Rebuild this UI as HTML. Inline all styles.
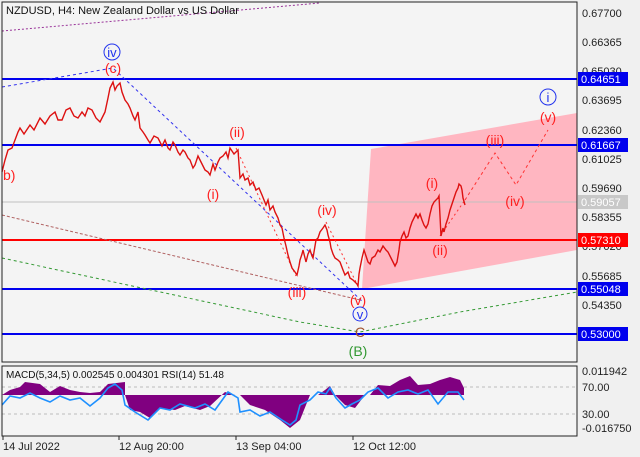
<!DOCTYPE html>
<html><head><meta charset="utf-8"><style>
html,body{margin:0;padding:0;background:#f0f0f0;}
svg{display:block;font-family:"Liberation Sans",sans-serif;}
</style></head><body>
<svg width="640" height="457" xmlns="http://www.w3.org/2000/svg">
<rect x="0" y="0" width="640" height="457" fill="#f0f0f0"/>
<rect x="2" y="2" width="575" height="360" fill="#f4f4f4"/>
<rect x="2" y="366" width="575" height="70" fill="#f4f4f4"/>
<polygon points="371,149 577,113 577,250 362,289" fill="#ffb6c1"/>
<line x1="2" y1="202" x2="577" y2="202" stroke="#c0c0c0" stroke-width="1"/>
<line x1="2" y1="79" x2="577" y2="79" stroke="#0000ee" stroke-width="2"/>
<line x1="2" y1="145" x2="577" y2="145" stroke="#0000ee" stroke-width="2"/>
<line x1="2" y1="240" x2="577" y2="240" stroke="#ff0000" stroke-width="2"/>
<line x1="2" y1="289" x2="577" y2="289" stroke="#0000ee" stroke-width="2"/>
<line x1="2" y1="334" x2="577" y2="334" stroke="#0000ee" stroke-width="2"/>
<polyline points="2,31 320,3" fill="none" stroke="#993399" stroke-dasharray="2,2"/>
<polyline points="2,87 113,68 363,302" fill="none" stroke="#3333ee" stroke-dasharray="3,3"/>
<polyline points="2,215 360,300" fill="none" stroke="#b06060" stroke-dasharray="3,2"/>
<polyline points="2,258 300,322 360,332 460,312 577,292" fill="none" stroke="#339933" stroke-dasharray="3,3"/>
<polyline points="236,148 296,276" fill="none" stroke="#ff3333" stroke-dasharray="2,3"/>
<polyline points="326,222 358,286" fill="none" stroke="#ff3333" stroke-dasharray="2,3"/>
<polyline points="440,236 465,200" fill="none" stroke="#ff3333" stroke-dasharray="2,3"/>
<polyline points="465,200 495,153 516,185 548,130" fill="none" stroke="#ff3333" stroke-dasharray="3,3"/>
<polyline points="2,172 5,160 8,150 12,148 15,140 18,132 20,128 24,134 30,125 34,130 40,118 45,124 50,116 55,112 58,120 62,120 66,110 70,108 74,116 78,118 82,112 85,116 88,108 92,110 96,118 100,122 103,116 105,112 108,98 110,88 113,82 115,90 117,86 120,83 122,92 125,100 128,104 130,108 133,116 135,120 138,112 140,128 143,132 145,135 148,140 150,143 154,136 158,138 162,146 165,140 168,148 170,150 173,142 175,145 178,152 180,155 183,150 185,152 188,158 190,160 193,168 195,165 198,156 200,160 203,166 205,170 208,172 210,175 213,164 215,170 218,162 220,158 223,156 226,152 228,158 230,148 234,154 238,150 240,178 243,174 245,180 248,178 250,185 253,182 256,190 259,188 262,195 266,205 268,200 270,210 273,206 275,212 278,218 280,225 282,228 284,238 286,246 288,255 290,262 292,268 295,272 297,275 299,266 300,260 302,254 303,250 305,258 306,262 308,254 310,250 312,256 313,258 315,246 316,240 318,238 320,232 323,228 325,225 327,230 328,235 330,242 331,248 333,254 335,258 338,260 340,262 343,270 345,275 348,272 350,278 353,280 355,282 357,284 358,286 359,274 360,268 362,258 364,250 366,256 368,262 370,264 372,258 375,256 378,250 380,252 383,246 386,250 388,252 391,258 393,262 395,266 397,262 399,250 400,242 402,236 404,232 406,238 408,236 410,228 412,222 414,218 416,214 418,218 420,214 422,220 424,225 426,228 428,224 430,214 432,206 434,202 436,200 438,198 439,196 440,216 441,236 443,228 444,232 446,224 448,218 450,210 452,204 454,198 456,192 458,188 459,184 461,186 462,190 463,198 465,205" fill="none" stroke="#dd1111" stroke-width="1.4"/>
<g font-size="14" fill="#ff2020" text-anchor="middle">
<text x="113" y="73">(c)</text>
<text x="237" y="137">(ii)</text>
<text x="213" y="199">(i)</text>
<text x="297" y="297">(iii)</text>
<text x="327" y="215">(iv)</text>
<text x="358" y="305">(v)</text>
<text x="432" y="188">(i)</text>
<text x="440" y="255">(ii)</text>
<text x="495" y="145">(iii)</text>
<text x="515" y="206">(iv)</text>
<text x="548" y="122">(v)</text>
<text x="3" y="180" text-anchor="start">b)</text>
</g>
<g font-size="13" fill="#2233ee" text-anchor="middle">
<circle cx="112" cy="52" r="8" fill="none" stroke="#2233ee"/><text x="112" y="57">iv</text>
<circle cx="360" cy="314" r="7" fill="none" stroke="#2233ee"/><text x="360" y="319">v</text>
<circle cx="548" cy="97" r="8" fill="none" stroke="#2233ee"/><text x="548" y="102">i</text>
</g>
<text x="360" y="337" font-size="14" fill="#a0522d" text-anchor="middle">C</text>
<text x="358" y="356" font-size="14" fill="#339933" text-anchor="middle">(B)</text>
<text x="6" y="14" font-size="11" fill="#111">NZDUSD, H4:  New Zealand Dollar vs US Dollar</text>
<line x1="2" y1="387" x2="577" y2="387" stroke="#bbb" stroke-dasharray="3,3"/>
<line x1="2" y1="414" x2="577" y2="414" stroke="#bbb" stroke-dasharray="3,3"/>
<path d="M2,395 L10,390 20,387 25,382 40,384 50,392 60,386 70,390 80,392 90,393 100,392 108,384 125,382 125,395 Z M125,395 L130,410 140,412 150,418 160,408 175,410 185,406 200,410 210,406 225,392 235,395 Z M240,395 L250,405 265,410 280,420 290,428 300,420 310,395 Z M318,395 L325,390 330,386 335,395 Z M335,395 L345,405 355,408 365,395 Z M370,395 L378,385 390,386 400,380 410,376 418,385 430,384 440,380 450,377 460,380 464,388 464,395 Z" fill="#800080"/>
<polyline points="2,405 10,396 20,398 30,393 40,398 50,402 60,396 70,400 80,398 90,406 100,398 108,388 115,384 122,390 125,405 135,412 148,420 160,408 170,410 180,404 195,408 205,404 215,410 228,392 238,398 240,412 250,410 260,416 270,412 282,420 290,425 296,420 300,405 310,400 318,392 326,394 330,388 336,398 345,408 352,404 360,400 368,392 378,388 388,398 398,392 408,390 418,394 428,390 438,404 448,392 458,392 464,400" fill="none" stroke="#1e90ff" stroke-width="1.6"/>
<text x="6" y="378" font-size="10" fill="#111">MACD(5,34,5) 0.002545 0.004301 RSI(14) 51.48</text>
<rect x="2" y="2" width="575" height="360" fill="none" stroke="#222" stroke-width="1"/>
<rect x="2" y="366" width="575" height="70" fill="none" stroke="#222" stroke-width="1"/>
<g font-size="11" fill="#222">
<text x="582" y="17">0.67700</text>
<text x="582" y="46">0.66365</text>
<text x="582" y="75">0.65030</text>
<text x="582" y="104">0.63695</text>
<text x="582" y="134">0.62360</text>
<text x="582" y="163">0.61025</text>
<text x="582" y="192">0.59690</text>
<text x="582" y="221">0.58355</text>
<text x="582" y="250">0.57020</text>
<text x="582" y="280">0.55685</text>
<text x="582" y="309">0.54350</text>
<text x="582" y="375">0.011942</text>
<text x="582" y="391">70.00</text>
<text x="582" y="418">30.00</text>
<text x="582" y="432">-0.016750</text>
</g>
<g font-size="11" fill="#fff">
<rect x="578" y="72" width="50" height="14" fill="#0000ee"/><text x="581" y="83">0.64651</text>
<rect x="578" y="138" width="50" height="14" fill="#0000ee"/><text x="581" y="149">0.61667</text>
<rect x="578" y="195" width="50" height="14" fill="#c8c8c8"/><text x="581" y="206">0.59057</text>
<rect x="578" y="233" width="50" height="14" fill="#ff0000"/><text x="581" y="244">0.57310</text>
<rect x="578" y="282" width="50" height="14" fill="#0000ee"/><text x="581" y="293">0.55048</text>
<rect x="578" y="327" width="50" height="14" fill="#0000ee"/><text x="581" y="338">0.53000</text>
</g>
<g stroke="#222"><line x1="3" y1="436" x2="3" y2="440"/><line x1="119" y1="436" x2="119" y2="440"/><line x1="236" y1="436" x2="236" y2="440"/><line x1="353" y1="436" x2="353" y2="440"/></g>
<g font-size="11" fill="#222">
<text x="3" y="450">14 Jul 2022</text>
<text x="119" y="450">12 Aug 20:00</text>
<text x="236" y="450">13 Sep 04:00</text>
<text x="353" y="450">12 Oct 12:00</text>
</g>
</svg>
</body></html>
